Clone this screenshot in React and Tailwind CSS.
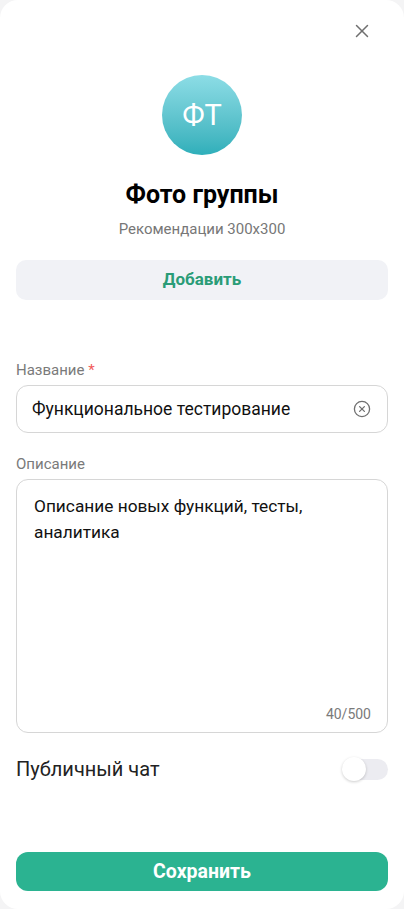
import { X } from "lucide-react";

export default function App() {
  return (
    <div className="w-[404px] h-[909px] bg-[#f4f4f5]" style={{ fontFamily: "Roboto, 'Noto Sans', sans-serif" }}>
      <div className="w-full h-full bg-white rounded-[18px] flex flex-col px-4">
        {/* Close */}
        <div className="flex justify-end pt-[20px] pr-[15px]">
          <X size={22} strokeWidth={1.6} className="text-[#6f6f6f]" />
        </div>

        {/* Avatar */}
        <div className="flex flex-col items-center">
          <div className="mt-[33px] w-[80px] h-[80px] rounded-full bg-gradient-to-b from-[#8cdde6] to-[#2eafba] flex items-center justify-center">
            <span className="text-white text-[29px] leading-none">ФТ</span>
          </div>
          <div className="mt-[25px] text-[25px] font-bold text-black leading-[30px]">Фото группы</div>
          <div className="mt-[9px] text-[15px] text-[#777] leading-[20px]">Рекомендации 300x300</div>
        </div>

        <button className="mt-[21px] h-[40px] w-full rounded-[10px] bg-[#f1f2f6] text-[#2a9c77] font-bold text-[17px]">
          Добавить
        </button>

        {/* Name */}
        <div className="mt-[61px] text-[15px] text-[#7a7a7a] leading-[18px]">
          Название <span className="text-[#f15b5b]">*</span>
        </div>
        <div className="mt-[6px] h-[48px] rounded-[12px] border border-[#d6d6d6] flex items-center pl-[15px] pr-[16px]">
          <span className="flex-1 text-[17.5px] text-[#111]">Функциональное тестирование</span>
          <svg width="18" height="18" viewBox="0 0 18 18" fill="none" stroke="#707070" strokeWidth="1.3">
            <circle cx="9" cy="9" r="7.6" />
            <path d="M6.6 6.6l4.8 4.8M11.4 6.6l-4.8 4.8" strokeLinecap="round" />
          </svg>
        </div>

        {/* Description */}
        <div className="mt-[22px] text-[15px] text-[#7a7a7a] leading-[18px]">Описание</div>
        <div className="mt-[6px] h-[254px] rounded-[12px] border border-[#d6d6d6] flex flex-col pl-[17px] pr-[16px] pt-[13px] pb-[9px]">
          <div className="flex-1 text-[17.3px] leading-[26px] text-[#111]">
            Описание новых функций, тесты,<br />аналитика
          </div>
          <div className="text-right text-[14px] text-[#7a7a7a] leading-[18px]">40/500</div>
        </div>

        {/* Public chat */}
        <div className="mt-[24px] flex items-center justify-between">
          <span className="text-[20px] text-[#222] leading-[24px]">Публичный чат</span>
          <div className="relative w-[46px] h-[24px] flex items-center">
            <div className="ml-[2px] w-[44px] h-[21px] rounded-full bg-[#ececf1]" />
            <div className="absolute left-0 top-0 w-[24px] h-[24px] rounded-full bg-white shadow-[0_1px_3px_rgba(0,0,0,0.2)]" />
          </div>
        </div>

        <div className="flex-1" />

        <button className="mb-[18px] h-[39px] w-full rounded-[12px] bg-[#2bb391] text-white font-bold text-[19.5px]">
          Сохранить
        </button>
      </div>
    </div>
  );
}
